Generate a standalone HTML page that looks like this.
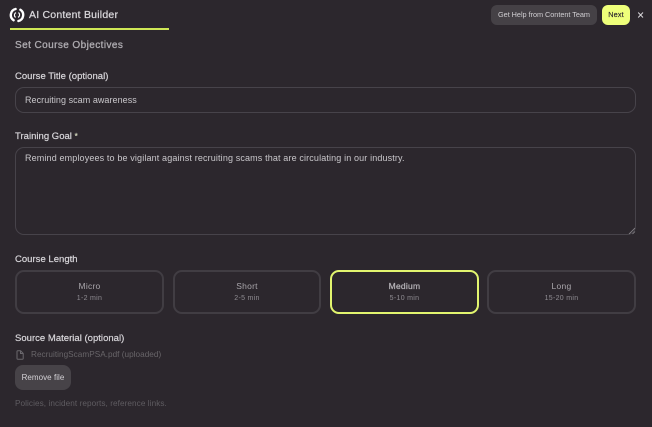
<!DOCTYPE html>
<html><head><meta charset="utf-8">
<style>
html,body{margin:0;padding:0;background:#2c272d;}
#p{position:relative;width:652px;height:427px;overflow:hidden;background:#2c272d;font-family:"Liberation Sans",sans-serif;color:#d6d4d8;filter:blur(.3px);}
#p div,#p svg{position:absolute;}
.t{white-space:nowrap;line-height:14px;}
.lb{left:15px;font-size:9.5px;font-weight:400;color:#d8d6da;letter-spacing:.02px;-webkit-text-stroke:.2px #d8d6da;}
.box{box-sizing:border-box;border:1px solid #47434a;border-radius:9px;}
.card{box-sizing:border-box;border:2px solid #413d43;border-radius:9px;}
.c{text-align:center;}
.n{font-size:8.5px;color:#a9a6ab;letter-spacing:.25px;}
.s{font-size:7px;color:#8f8c92;letter-spacing:.3px;}
</style></head><body><div id="p">
<svg style="left:9px;top:7px" width="16" height="16" viewBox="0 0 16 16"><path d="M6.6 2A6.2 6.2 0 0 0 4.6 13.2" stroke="#fff" stroke-width="2.4" stroke-linecap="round" fill="none"/><path d="M9.4 14A6.2 6.2 0 0 0 11.4 2.8" stroke="#fff" stroke-width="2.4" stroke-linecap="round" fill="none"/><path d="M9.4 5.6A2.8 2.8 0 0 1 9 10.4M6.6 10.4A2.8 2.8 0 0 1 7 5.6" stroke="#fff" stroke-width="1.1" fill="none"/></svg>
<div class="t" style="left:29px;top:8px;font-size:10.5px;color:#d9d7db;letter-spacing:.22px;-webkit-text-stroke:.25px #d9d7db">AI Content Builder</div>
<div style="left:10px;top:28px;width:159px;height:2px;background:#cfe756"></div>

<div style="left:491px;top:5px;width:106px;height:20px;border-radius:6px;background:#454146"></div>
<div class="t c" style="left:491px;top:8px;width:106px;font-size:7.3px;color:#d0ced2;letter-spacing:-.03px">Get Help from Content Team</div>
<div style="left:602px;top:5px;width:28px;height:20px;border-radius:6px;background:#eeff7a"></div>
<div class="t c" style="left:602px;top:8px;width:28px;font-size:7.3px;color:#2c272d;letter-spacing:.1px;-webkit-text-stroke:.15px #2c272d">Next</div>
<svg style="left:637px;top:11px" width="7" height="8" viewBox="0 0 7 8"><path d="M1.2 1.5 6 6.5M6 1.5 1.2 6.5" stroke="#d6d4d8" stroke-width="1" fill="none"/></svg>

<div class="t" style="left:15px;top:39px;font-size:10px;color:#aeabb0;letter-spacing:.42px;-webkit-text-stroke:.3px #aeabb0">Set Course Objectives</div>

<div class="t lb" style="top:70px">Course Title (optional)</div>
<div class="box" style="left:15px;top:87px;width:621px;height:26px"></div>
<div class="t" style="left:25px;top:93px;font-size:9px;color:#c9c7cb;letter-spacing:.05px">Recruiting scam awareness</div>

<div class="t lb" style="top:130px">Training Goal <span style="color:#c8d88a;font-size:8px">*</span></div>
<div class="box" style="left:15px;top:147px;width:621px;height:88px"></div>
<div class="t" style="left:25px;top:151px;font-size:9px;color:#c9c7cb;letter-spacing:.14px">Remind employees to be vigilant against recruiting scams that are circulating in our industry.</div>
<svg style="left:628px;top:227px" width="8" height="8" viewBox="0 0 8 8"><path d="M1 7 7 1M4.5 7 7 4.5" stroke="#8a878c" stroke-width=".8" fill="none"/></svg>

<div class="t lb" style="top:253px">Course Length</div>
<div class="card" style="left:15px;top:270px;width:149px;height:44px"></div>
<div class="card" style="left:173px;top:270px;width:148px;height:44px"></div>
<div class="card" style="left:330px;top:270px;width:149px;height:44px;border-color:#e2f56f"></div>
<div class="card" style="left:487px;top:270px;width:149px;height:44px"></div>
<div class="t c n" style="left:15px;top:279px;width:149px">Micro</div>
<div class="t c s" style="left:15px;top:292px;width:149px">1-2 min</div>
<div class="t c n" style="left:173px;top:279px;width:148px">Short</div>
<div class="t c s" style="left:173px;top:292px;width:148px">2-5 min</div>
<div class="t c n" style="left:330px;top:279px;width:149px;color:#b5b2b7;-webkit-text-stroke:.25px #b5b2b7">Medium</div>
<div class="t c s" style="left:330px;top:292px;width:149px">5-10 min</div>
<div class="t c n" style="left:487px;top:279px;width:149px">Long</div>
<div class="t c s" style="left:487px;top:292px;width:149px">15-20 min</div>

<div class="t lb" style="top:332px">Source Material (optional)</div>
<svg style="left:16px;top:350px" width="8" height="10" viewBox="0 0 8 10"><path d="M1 1.5Q1 .8 1.7.8H4.6L7.2 3.4V8.5Q7.2 9.2 6.5 9.2H1.7Q1 9.2 1 8.5ZM4.5 1V3.5H7" stroke="#6b686d" stroke-width="1" fill="none"/></svg>
<div class="t" style="left:31px;top:348px;font-size:8.2px;color:#686569;letter-spacing:.03px">RecruitingScamPSA.pdf (uploaded)</div>
<div style="left:15px;top:365px;width:56px;height:25px;border-radius:8px;background:#474348"></div>
<div class="t c" style="left:15px;top:371px;width:56px;font-size:8px;color:#d4d2d6;letter-spacing:.05px">Remove file</div>
<div class="t" style="left:15px;top:397px;font-size:8.2px;color:#5f5c61;letter-spacing:.07px">Policies, incident reports, reference links.</div>
</div></body></html>
